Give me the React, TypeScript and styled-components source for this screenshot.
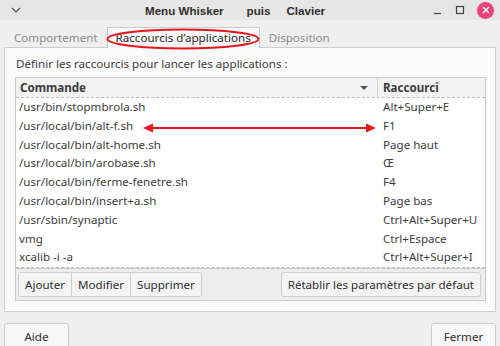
import React from 'react'
import styled, { createGlobalStyle } from 'styled-components'

const rows: [string, string][] = [
  ['/usr/bin/stopmbrola.sh', 'Alt+Super+E'],
  ['/usr/local/bin/alt-f.sh', 'F1'],
  ['/usr/local/bin/alt-home.sh', 'Page haut'],
  ['/usr/local/bin/arobase.sh', 'Œ'],
  ['/usr/local/bin/ferme-fenetre.sh', 'F4'],
  ['/usr/local/bin/insert+a.sh', 'Page bas'],
  ['/usr/sbin/synaptic', 'Ctrl+Alt+Super+U'],
  ['vmg', 'Ctrl+Espace'],
  ['xcalib -i -a', 'Ctrl+Alt+Super+I']
]

const App: React.FC = () => (
  <>
    <GlobalStyle />
    <Window>
      <TitleBar>
        <Chevron width="10" height="6" viewBox="0 0 10 6">
          <path d="M1 1 L5 5 L9 1" fill="none" stroke="#555" strokeWidth="1.2" />
        </Chevron>
        <Title>
          <TitleWord>Menu Whisker</TitleWord>
          <TitleWord gap={23}>puis</TitleWord>
          <TitleWord gap={16}>Clavier</TitleWord>
        </Title>
        <Controls>
          <svg width="10" height="10" viewBox="0 0 10 10">
            <path d="M1 8.5 H8" stroke="#444" strokeWidth="1.2" />
          </svg>
          <svg width="10" height="10" viewBox="0 0 10 10">
            <rect x="1.5" y="1.5" width="7" height="7" fill="none" stroke="#444" strokeWidth="1.2" />
          </svg>
          <CloseButton>
            <svg width="8" height="8" viewBox="0 0 8 8">
              <path d="M1 1 L7 7 M7 1 L1 7" stroke="#fff" strokeWidth="1.4" />
            </svg>
          </CloseButton>
        </Controls>
      </TitleBar>

      <TabBar>
        <Tab>Comportement</Tab>
        <Tab active>
          Raccourcis d’applications
          <Ellipse width="154" height="22" viewBox="0 0 154 22">
            <ellipse cx="77" cy="11" rx="75.5" ry="9.5" fill="none" stroke="#e8151b" strokeWidth="2" />
          </Ellipse>
        </Tab>
        <Tab>Disposition</Tab>
      </TabBar>

      <Panel>
        <Intro>Définir les raccourcis pour lancer les applications :</Intro>
        <Table>
          <HeaderRow>
            <HeaderCell>
              Commande
              <SortArrow />
            </HeaderCell>
            <HeaderCell last>Raccourci</HeaderCell>
          </HeaderRow>
          <Body>
            {rows.map(([cmd, key]) => (
              <Row key={cmd}>
                <Cell>{cmd}</Cell>
                <Cell>{key}</Cell>
              </Row>
            ))}
            <Arrow width="233" height="10" viewBox="0 0 233 10">
              <path d="M8 5 H225" stroke="#e8151b" strokeWidth="2" />
              <path d="M0 5 L10 0.5 L10 9.5 Z" fill="#e8151b" />
              <path d="M233 5 L223 0.5 L223 9.5 Z" fill="#e8151b" />
            </Arrow>
          </Body>
        </Table>
        <ButtonFrame>
          <ButtonGroup>
            <ToolButton>Ajouter</ToolButton>
            <ToolButton>Modifier</ToolButton>
            <ToolButton>Supprimer</ToolButton>
          </ButtonGroup>
          <ToolButton single>Rétablir les paramètres par défaut</ToolButton>
        </ButtonFrame>
      </Panel>

      <Footer>
        <DialogButton>Aide</DialogButton>
        <DialogButton>Fermer</DialogButton>
      </Footer>
    </Window>
  </>
)

const GlobalStyle = createGlobalStyle`
  body {
    margin: 0;
    background: #efefef;
    font-family: 'Noto Sans', 'Open Sans', sans-serif;
    color: #3c3c3c;
  }
`

const Window = styled.div`
  width: 500px;
  height: 346px;
  overflow: hidden;
  background: #efefef;
  font-size: 11.6px;
`

const TitleBar = styled.div`
  height: 20px;
  background: #e6e6e6;
  display: flex;
  align-items: center;
  padding: 0 6px 0 11px;
  box-sizing: border-box;
`

const Chevron = styled.svg`
  flex: none;
`

const Title = styled.div`
  flex: 1;
  display: flex;
  padding-left: 124px;
  font-family: 'Liberation Sans', Arial, sans-serif;
  font-weight: bold;
  font-size: 11.6px;
  color: #2e2e2e;
`

const TitleWord = styled.span<{ gap?: number }>`
  margin-left: ${({ gap }) => gap ?? 0}px;
`

const Controls = styled.div`
  display: flex;
  align-items: center;
  gap: 12px;
`

const CloseButton = styled.div`
  width: 17px;
  height: 17px;
  border-radius: 50%;
  background: #e8437a;
  display: flex;
  align-items: center;
  justify-content: center;
`

const TabBar = styled.div`
  display: flex;
  align-items: flex-end;
  height: 27px;
  padding-left: 5px;
`

const Tab = styled.div<{ active?: boolean }>`
  position: relative;
  height: 20px;
  line-height: 20px;
  padding: 0 8px;
  color: ${({ active }) => (active ? '#2b2b2b' : '#8c8c8c')};
  background: ${({ active }) => (active ? '#fafafa' : 'transparent')};
  border: 1px solid ${({ active }) => (active ? '#cdcdcd' : 'transparent')};
  border-bottom: none;
  margin-bottom: -1px;
  z-index: 1;
`

const Ellipse = styled.svg`
  position: absolute;
  left: -2px;
  top: 0px;
  pointer-events: none;
`

const Panel = styled.div`
  margin: 0 4px;
  background: #fafafa;
  border: 1px solid #cdcdcd;
  padding: 7px 9px 10px 10px;
`

const Intro = styled.div`
  line-height: 17px;
  margin-bottom: 5px;
  padding-left: 1px;
`

const Table = styled.div`
  border: 1px solid #c9c9c9;
  border-bottom: none;
  background: #fff;
`

const HeaderRow = styled.div`
  display: grid;
  grid-template-columns: 362px 1fr;
  height: 19px;
  background: #f2f2f2;
`

const HeaderCell = styled.div<{ last?: boolean }>`
  position: relative;
  font-weight: bold;
  line-height: 19px;
  padding-left: ${({ last }) => (last ? '5px' : '4px')};
  border-right: ${({ last }) => (last ? 'none' : '1px solid #d2d2d2')};
`

const SortArrow = styled.span`
  position: absolute;
  right: 9px;
  top: 8px;
  border-left: 4px solid transparent;
  border-right: 4px solid transparent;
  border-top: 4px solid #555;
`

const Body = styled.div`
  position: relative;
  border-top: 1px dashed #bdbdbd;
  border-bottom: 1px dashed #bdbdbd;
`

const Row = styled.div`
  display: grid;
  grid-template-columns: 362px 1fr;
  height: 18.8px;
`

const Cell = styled.div`
  line-height: 18.8px;
  padding-left: 3px;
  white-space: nowrap;
  &:last-child {
    padding-left: 5px;
  }
`

const Arrow = styled.svg`
  position: absolute;
  left: 127px;
  top: 24.6px;
`

const ButtonFrame = styled.div`
  display: flex;
  justify-content: space-between;
  align-items: center;
  background: #ededed;
  border: 1px solid #cbcbcb;
  padding: 3px 4px 3px 2px;
`

const ButtonGroup = styled.div`
  display: flex;
  border: 1px solid #cfcfcf;
  border-radius: 3px;
  overflow: hidden;
`

const ToolButton = styled.button<{ single?: boolean }>`
  font-family: inherit;
  font-size: 11.6px;
  color: #2f2f2f;
  background: #f4f4f4;
  height: ${({ single }) => (single ? '25px' : '23px')};
  padding: 0 6px;
  border: ${({ single }) => (single ? '1px solid #cfcfcf' : 'none')};
  border-radius: ${({ single }) => (single ? '3px' : '0')};
  & + & {
    border-left: 1px solid #cfcfcf;
  }
`

const Footer = styled.div`
  display: flex;
  justify-content: space-between;
  padding: 11px 4px 0 4px;
`

const DialogButton = styled.button`
  font-family: inherit;
  font-size: 11.6px;
  color: #2f2f2f;
  background: #f7f7f7;
  width: 65px;
  height: 28px;
  border: 1px solid #cbcbcb;
  border-radius: 3px;
  padding: 0 0 2px;
`

export default App
